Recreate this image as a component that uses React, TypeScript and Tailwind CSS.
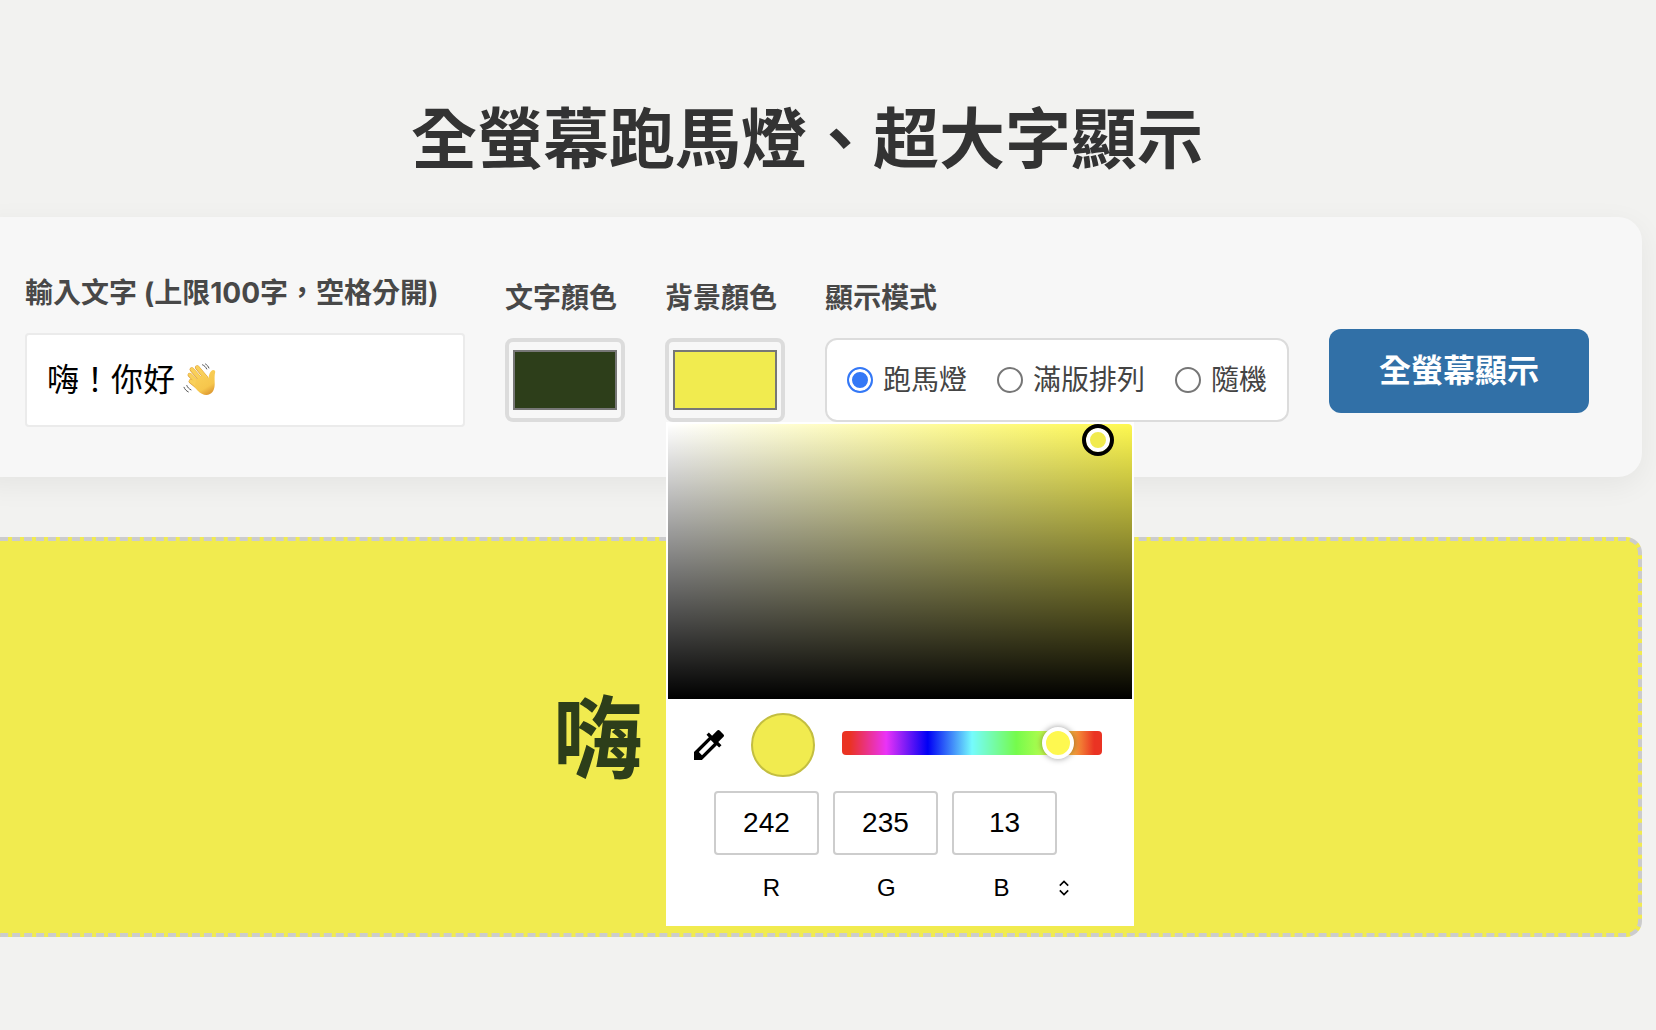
import { useState } from 'react';

const MODES = [
  { id: 'marquee', label: '跑馬燈' },
  { id: 'grid', label: '滿版排列' },
  { id: 'random', label: '隨機' },
];

const LABEL = 'block pt-0.5 text-[28px] leading-[48px] font-bold text-[#484848]';

const COLOR_INPUT =
  'block h-[84px] w-[120px] cursor-pointer appearance-none rounded-lg border-4 border-[#dcdcdc] bg-transparent [&::-webkit-color-swatch-wrapper]:px-1 [&::-webkit-color-swatch-wrapper]:py-2 [&::-webkit-color-swatch]:rounded-none [&::-webkit-color-swatch]:border-2 [&::-webkit-color-swatch]:border-[#777]';

function WaveIcon() {
  return (
    <svg viewBox="0 0 34 34" className="h-[34px] w-[34px]" aria-hidden="true">
      <defs>
        <linearGradient id="palm" x1="0.2" y1="0" x2="0.7" y2="1">
          <stop offset="0" stopColor="#fad15a" />
          <stop offset="0.7" stopColor="#f6c64c" />
          <stop offset="1" stopColor="#dc9630" />
        </linearGradient>
      </defs>
      <g fill="none" strokeLinecap="round">
        <path d="M14.200 4.500 23 15M8.800 6.500 19 18M6.800 12 17 22M7.800 18.300 16 25" stroke="#d9962f" strokeWidth="4.400" />
        <path d="M14.300 4.300 23 15M8.900 6.300 19 18M6.900 11.800 17 22M7.900 18.100 16 25" stroke="#f9d05a" strokeWidth="3.600" />
      </g>
      <path
        d="M13 17 20 11.500l3.800 3.200c.9.7 1.700.3 1.900-.8.300-2.300 1-4.300 2.600-6 1.500-1.500 4-.9 3.900 1.100-.8 3.500-.6 6.500-.5 10.500.2 5.500-1 9.500-4.800 11.600-4 2.100-8.400.4-12.400-3.600L11.500 24z"
        fill="url(#palm)"
      />
      <path
        d="M19.500 1.800c2 .8 3.300 2.200 4.200 4.200M22.500 1c1.600.9 2.700 2.200 3.400 4M3.800 22.500c.8 2 2.200 3.500 4.200 4.400M1 24.300c.8 2 2.200 3.600 4.300 4.600"
        fill="none"
        stroke="#555"
        strokeWidth="1"
        strokeLinecap="round"
      />
    </svg>
  );
}

function ColorPicker() {
  const [hue, setHue] = useState(316);
  const channels = [
    { id: 'R', value: '242' },
    { id: 'G', value: '235' },
    { id: 'B', value: '13' },
  ];

  return (
    <div className="absolute top-full left-px z-10 w-[468px] bg-white p-0.5 pb-6 font-['Liberation_Sans',sans-serif] text-black">
      <div className="relative h-[275px] rounded-tr-sm bg-[linear-gradient(to_top,#000,transparent),linear-gradient(to_right,#fff,#fef850)]">
        <span className="absolute top-0 right-[18px] size-8 rounded-full border-4 border-black bg-[#f1eb4f] shadow-[inset_0_0_0_4px_#fff]" />
      </div>

      <div className="mt-3.5 flex items-center gap-[27px] px-[26px]">
        <button type="button" aria-label="eyedropper" className="shrink-0">
          <svg viewBox="3 3 18 18" className="size-[30px]">
            <path
              d="M20.710 5.630l-2.340-2.340c-.39-.39-1.020-.39-1.410 0l-3.120 3.120-1.930-1.910-1.410 1.410 1.420 1.420L3 16.250V21h4.750l8.920-8.920 1.420 1.420 1.410-1.410-1.920-1.920 3.120-3.120c.4-.4.4-1.030.01-1.420zM7.800 18.100L5.900 16.200l7.160-7.180 1.920 1.920z"
              fill="#000"
            />
          </svg>
        </button>
        <span className="size-16 shrink-0 rounded-full border-2 border-[#c3be40] bg-[#f1eb4f]" />
        <input
          type="range"
          aria-label="hue"
          min={0}
          max={360}
          value={hue}
          onChange={(e) => setHue(Number(e.target.value))}
          className="mb-1 h-6 w-[260px] min-w-0 appearance-none rounded bg-[linear-gradient(to_right,#ea3323_0%,#ea3323_3%,#ea33f7_17%,#0000f5_33%,#75fbfd_50%,#75fb4c_67%,#a5fc4e_75%,#fef850_83%,#ea3323_97%,#ea3323_100%)] [&::-webkit-slider-thumb]:size-8 [&::-webkit-slider-thumb]:appearance-none [&::-webkit-slider-thumb]:rounded-full [&::-webkit-slider-thumb]:border-4 [&::-webkit-slider-thumb]:border-white [&::-webkit-slider-thumb]:bg-[#fef850] [&::-webkit-slider-thumb]:shadow-[0_0_6px_rgba(0,0,0,0.4)]"
        />
      </div>

      <div className="mt-3.5 flex gap-3.5 px-[46px]">
        {channels.map((c) => (
          <input
            key={c.id}
            id={`channel-${c.id}`}
            type="text"
            defaultValue={c.value}
            className="h-16 w-[105px] rounded border-2 border-[#cdcdcd] text-center text-[28px] leading-8"
          />
        ))}
      </div>

      <div className="mt-[19px] flex items-center pl-[46px] text-2xl leading-7">
        {channels.map((c) => (
          <label key={c.id} htmlFor={`channel-${c.id}`} className="w-[115px] text-center">
            {c.id}
          </label>
        ))}
        <button type="button" aria-label="switch format">
          <svg viewBox="0 0 10 16" className="h-4 w-2.5" fill="none" stroke="#000" strokeWidth="1.600">
            <path d="M.8 5.600 5 1.400l4.200 4.200M.8 10.400 5 14.600l4.200-4.200" />
          </svg>
        </button>
      </div>
    </div>
  );
}

export default function App() {
  const [text, setText] = useState('嗨！你好');
  const [textColor, setTextColor] = useState('#2d3e1a');
  const [bgColor, setBgColor] = useState('#f1eb4f');
  const [mode, setMode] = useState('marquee');

  return (
    <div className="min-h-screen overflow-hidden bg-[#f2f2f0] font-['Inter','Noto_Sans_CJK_TC',sans-serif]">
      <main className="mr-3.5 -ml-7 pt-[99px] pb-20">
        <h1 className="mb-[38px] text-center text-[66px] leading-[80px] font-bold text-[#333]">
          全螢幕跑馬燈、超大字顯示
        </h1>

        <section className="flex items-center gap-10 rounded-3xl bg-[#f7f7f7] px-[53px] py-[50px] shadow-[0_8px_30px_rgba(0,0,0,0.06)]">
          <div className="flex-1">
            <label htmlFor="message" className={LABEL}>
              輸入文字 (上限100字，空格分開)
            </label>
            <div className="relative mt-4">
              <input
                id="message"
                type="text"
                maxLength={100}
                value={text}
                onChange={(e) => setText(e.target.value)}
                className="block h-[94px] w-full rounded border-2 border-[#ebebeb] bg-white px-5 pb-1.5 text-[32px] text-black"
              />
              <span className="pointer-events-none absolute inset-y-0 left-[158px] flex items-center">
                <WaveIcon />
              </span>
            </div>
          </div>

          <div className="shrink-0">
            <label htmlFor="text-color" className={LABEL}>
              文字顏色
            </label>
            <div className="mt-4">
              <input
                id="text-color"
                type="color"
                value={textColor}
                onChange={(e) => setTextColor(e.target.value)}
                className={COLOR_INPUT}
              />
            </div>
          </div>

          <div className="relative shrink-0">
            <label htmlFor="bg-color" className={LABEL}>
              背景顏色
            </label>
            <div className="mt-4">
              <input
                id="bg-color"
                type="color"
                value={bgColor}
                onChange={(e) => setBgColor(e.target.value)}
                className={COLOR_INPUT}
              />
            </div>
            <ColorPicker />
          </div>

          <fieldset className="shrink-0">
            <legend className={LABEL}>顯示模式</legend>
            <div className="mt-4 flex h-[84px] items-center gap-[30px] rounded-xl border-2 border-[#dcdcdc] bg-white px-5">
              {MODES.map((m) => (
                <label key={m.id} className="flex items-center gap-2.5 text-[28px] leading-10 text-[#444]">
                  <input
                    type="radio"
                    name="mode"
                    checked={mode === m.id}
                    onChange={() => setMode(m.id)}
                    className="size-[26px] appearance-none rounded-full border-2 border-[#767676] bg-white checked:border-[#3478f6] checked:bg-[#3478f6] checked:shadow-[inset_0_0_0_3px_#fff]"
                  />
                  {m.label}
                </label>
              ))}
            </div>
          </fieldset>

          <button
            type="button"
            className="mt-12 h-[84px] w-[260px] shrink-0 rounded-xl bg-[#3170a7] text-[32px] font-bold text-white"
          >
            全螢幕顯示
          </button>
        </section>

        <section
          className="mt-[60px] flex h-[400px] items-center overflow-hidden rounded-2xl border-4 border-dashed border-[#ccc] pt-1 pl-[577px]"
          style={{ backgroundColor: bgColor, color: textColor }}
        >
          <p className="text-[90px] leading-none font-bold whitespace-nowrap">{text}</p>
        </section>
      </main>
    </div>
  );
}
